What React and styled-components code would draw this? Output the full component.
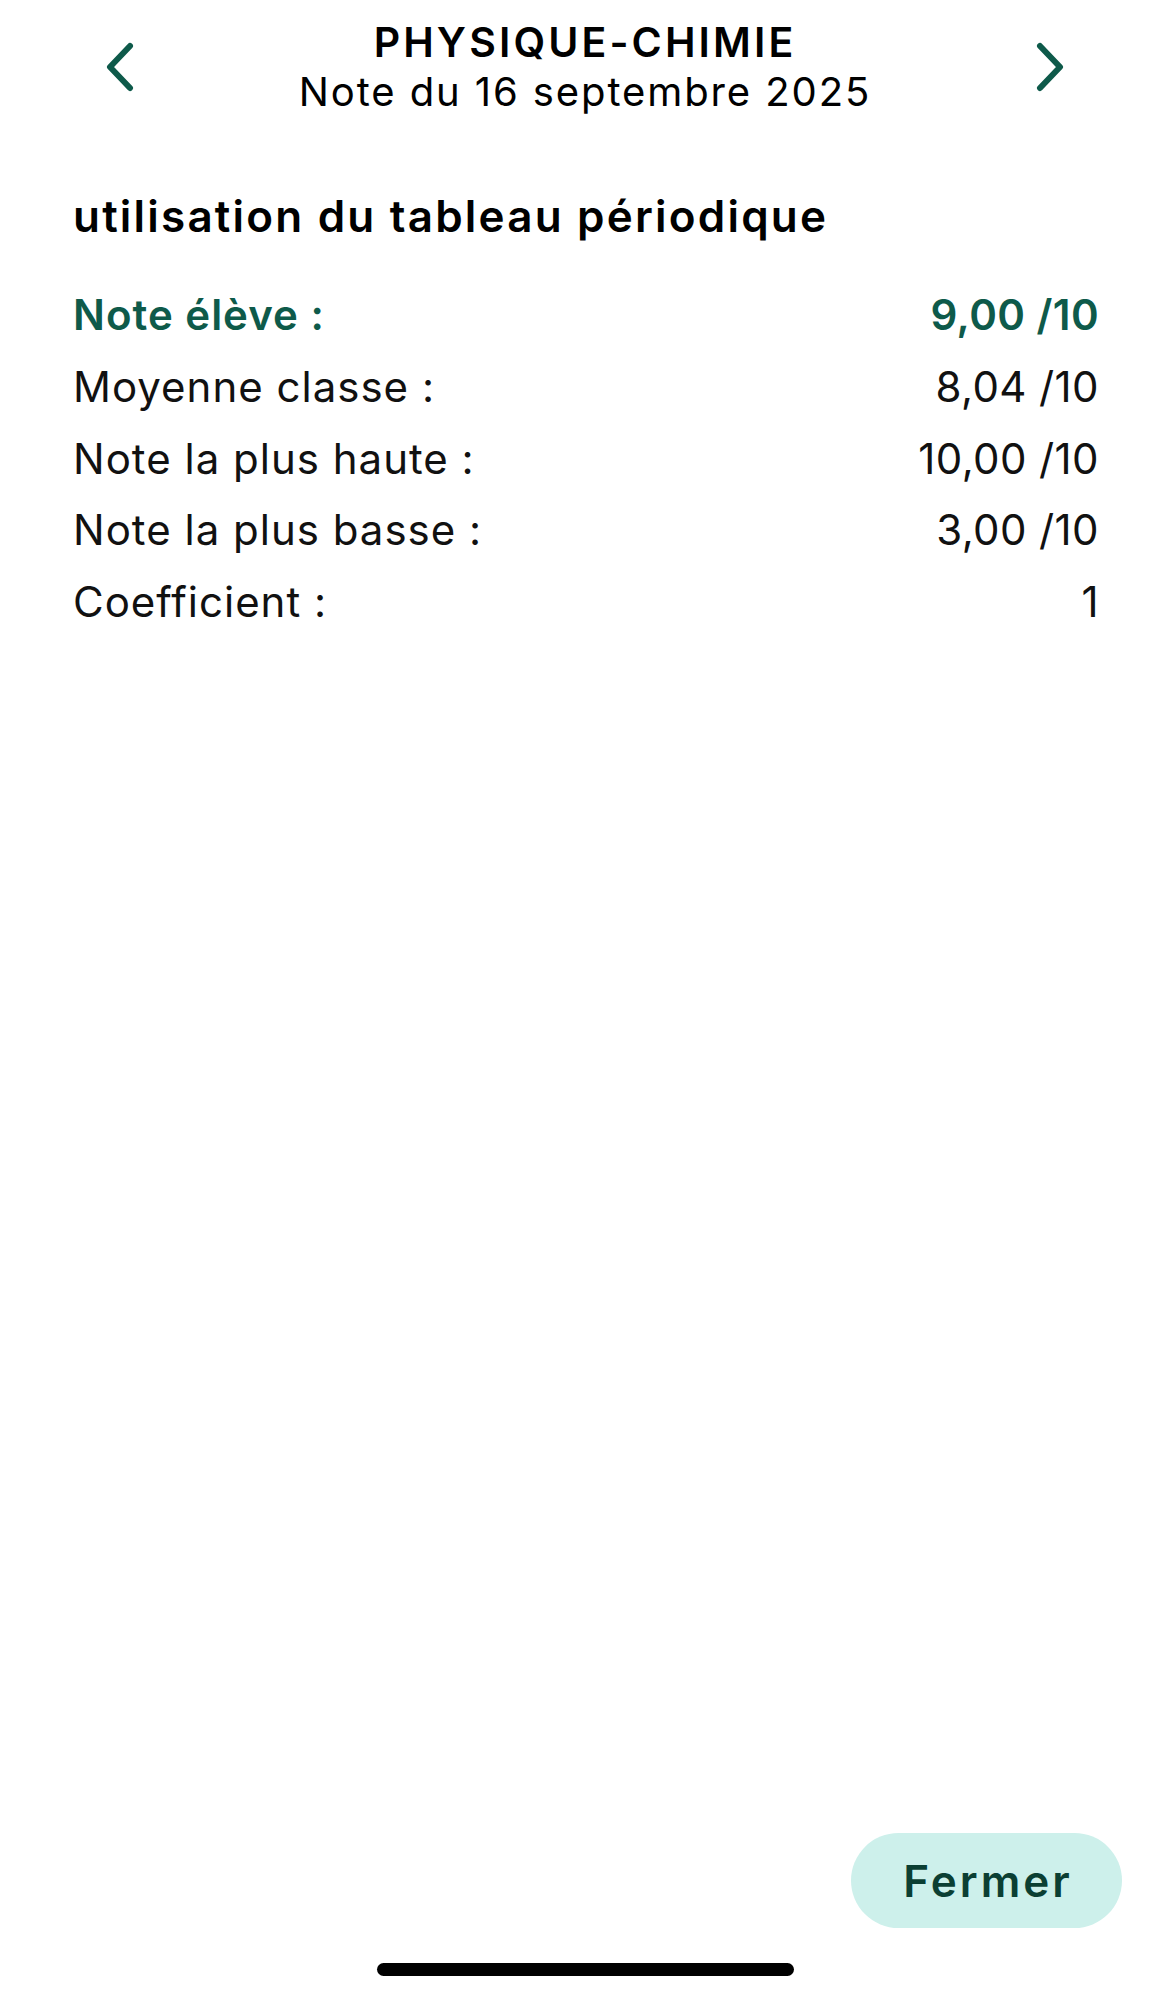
import React from 'react';
import styled, { createGlobalStyle } from 'styled-components';

const GlobalStyle = createGlobalStyle`
  html, body {
    margin: 0;
    padding: 0;
    background: #fff;
  }
  body {
    font-family: Inter, "Noto Sans", "Liberation Sans", sans-serif;
    color: #111;
  }
`;

const GREEN = '#0e5a4a';

const Page = styled.div`
  min-height: 100vh;
  display: flex;
  flex-direction: column;
  box-sizing: border-box;
`;

const Header = styled.header`
  display: flex;
  align-items: center;
  justify-content: space-between;
  padding: 17px 100px 0 100px;
`;

const NavButton = styled.button`
  border: 0;
  background: none;
  padding: 0;
  width: 40px;
  height: 56px;
  display: flex;
  align-items: center;
  justify-content: center;
  color: ${GREEN};
  cursor: pointer;
`;

const TitleBlock = styled.div`
  display: flex;
  flex-direction: column;
  align-items: center;
  text-align: center;
`;

const Subject = styled.div`
  font-size: 41px;
  line-height: 50px;
  font-weight: 600;
  letter-spacing: 3.1px;
  color: #000;
`;

const DateLine = styled.div`
  font-size: 40px;
  line-height: 50px;
  font-weight: 400;
  letter-spacing: 1.9px;
  color: #000;
`;

const Content = styled.main`
  padding: 0 71px 0 73px;
  flex: 1;
`;

const EvalTitle = styled.h1`
  margin: 74px 0 38px;
  font-size: 44px;
  line-height: 50px;
  font-weight: 600;
  color: #000;
  letter-spacing: 2.2px;
`;

const Row = styled.div`
  display: flex;
  justify-content: space-between;
  align-items: baseline;
  font-size: 42px;
  line-height: 71.8px;
  letter-spacing: 1px;
  font-weight: ${p => (p.$highlight ? 600 : 400)};
  color: ${p => (p.$highlight ? GREEN : '#111')};
`;

const Value = styled.span`
  letter-spacing: 0.4px;
`;

const Footer = styled.footer`
  display: flex;
  flex-direction: column;
  align-items: stretch;
`;

const ButtonBar = styled.div`
  display: flex;
  justify-content: flex-end;
  padding: 0 48px 35px 0;
`;

const CloseButton = styled.button`
  width: 271px;
  height: 95px;
  border: 0;
  border-radius: 48px;
  background: #cdf0eb;
  color: #0b3f33;
  font-family: inherit;
  font-size: 44px;
  font-weight: 600;
  letter-spacing: 3px;
  padding: 0 0 0 3px;
  cursor: pointer;
`;

const HomeBar = styled.div`
  align-self: center;
  width: 417px;
  height: 13px;
  border-radius: 7px;
  background: #000;
  margin-bottom: 23px;
`;

const Chevron = ({ dir }) => (
  <svg width="32" height="50" viewBox="0 0 32 50" fill="none">
    <polyline
      points={dir === 'left' ? '26,4 6,25 26,46' : '6,4 26,25 6,46'}
      stroke="currentColor"
      strokeWidth="6"
      strokeLinecap="round"
      strokeLinejoin="round"
    />
  </svg>
);

const rows = [
  { label: 'Note élève :', value: '9,00 /10', highlight: true },
  { label: 'Moyenne classe :', value: '8,04 /10' },
  { label: 'Note la plus haute :', value: '10,00 /10' },
  { label: 'Note la plus basse :', value: '3,00 /10' },
  { label: 'Coefficient :', value: '1' },
];

export default function App() {
  return (
    <Page>
      <GlobalStyle />
      <Header>
        <NavButton aria-label="Précédent">
          <Chevron dir="left" />
        </NavButton>
        <TitleBlock>
          <Subject>PHYSIQUE-CHIMIE</Subject>
          <DateLine>Note du 16 septembre 2025</DateLine>
        </TitleBlock>
        <NavButton aria-label="Suivant">
          <Chevron dir="right" />
        </NavButton>
      </Header>

      <Content>
        <EvalTitle>utilisation du tableau périodique</EvalTitle>
        {rows.map(r => (
          <Row key={r.label} $highlight={r.highlight}>
            <span>{r.label}</span>
            <Value>{r.value}</Value>
          </Row>
        ))}
      </Content>

      <Footer>
        <ButtonBar>
          <CloseButton>Fermer</CloseButton>
        </ButtonBar>
        <HomeBar />
      </Footer>
    </Page>
  );
}
